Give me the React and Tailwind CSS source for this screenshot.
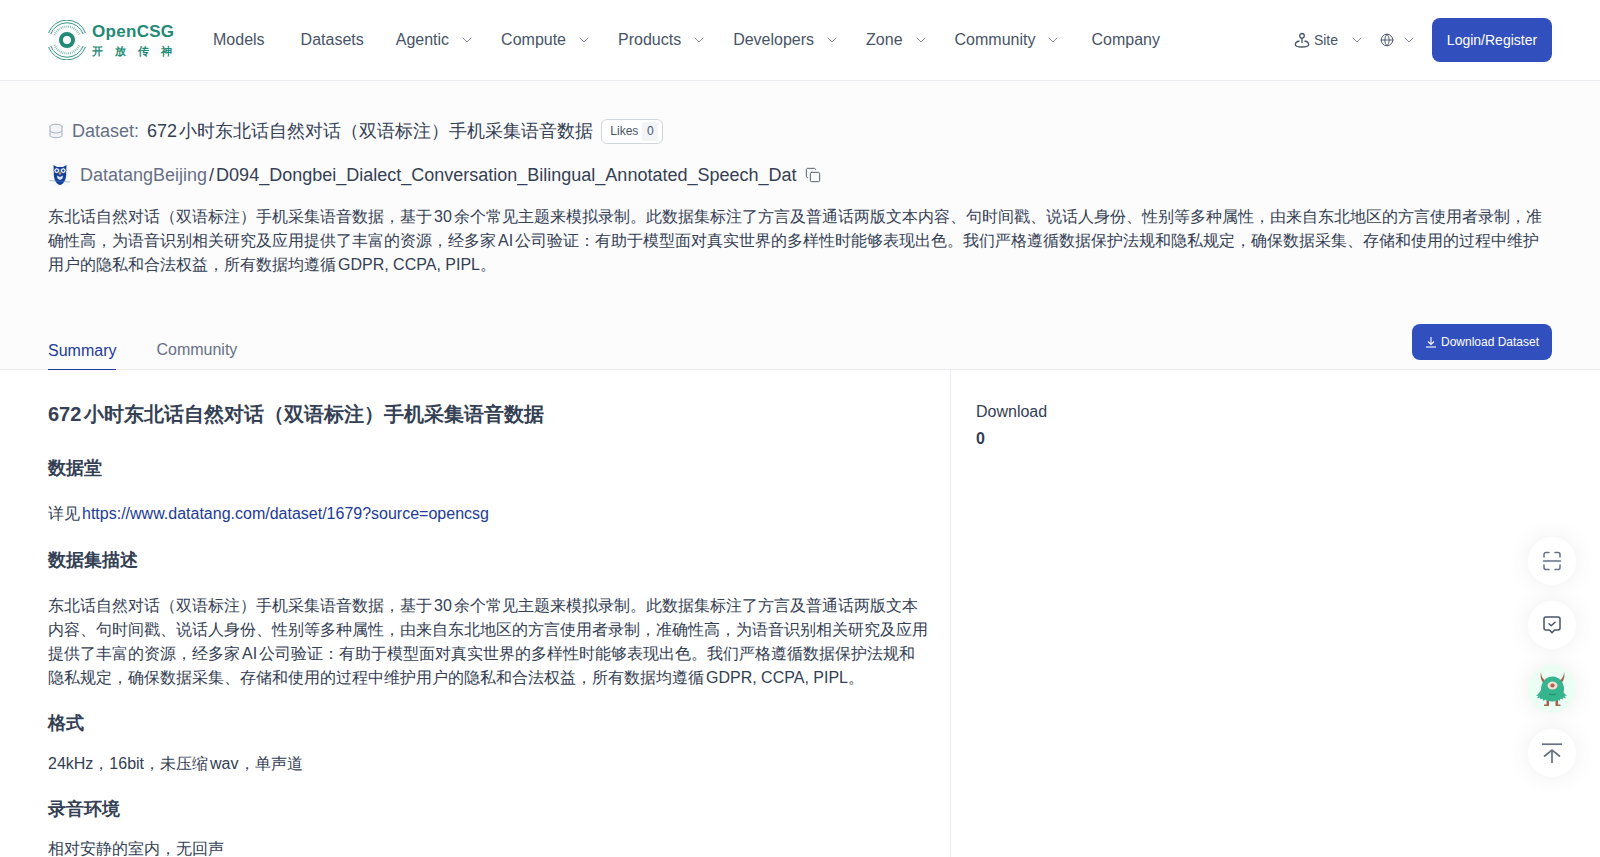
import React from "react";
import { ChevronDown, Globe, Database, Copy } from "lucide-react";

function Logo() {
  return (
    <div className="flex items-center w-[129px] h-[42px]">
      <svg width="40" height="40" viewBox="0 0 40 40" className="shrink-0 -ml-[1px]" fill="none" stroke="#1f8a76">
        <circle cx="20" cy="20" r="6" strokeWidth="4" />
        <path d="M1.500 13A19.700 19.700 0 0 1 38.500 13" strokeWidth="0.9" />
        <path d="M3.800 14A17.300 17.300 0 0 1 36.200 14" strokeWidth="0.9" />
        <path d="M7.500 15A13.500 13.500 0 0 1 32.500 15" strokeWidth="2.400" strokeDasharray="0.8 1.100" opacity="0.6" />
        <path d="M1.500 27A19.700 19.700 0 0 0 38.500 27" strokeWidth="0.9" />
        <path d="M3.800 26A17.300 17.300 0 0 0 36.200 26" strokeWidth="0.9" />
        <path d="M7.500 25A13.500 13.500 0 0 0 32.500 25" strokeWidth="2.400" strokeDasharray="0.8 1.100" opacity="0.6" />
      </svg>
      <div className="ml-[5px] flex flex-col text-[#1f8a76]">
        <span className="font-bold text-[17px] leading-[22px] tracking-[0.3px] whitespace-nowrap">OpenCSG</span>
        <span className="text-[11px] font-bold leading-[16px] flex justify-between w-[80px]">
          <span>开</span><span>放</span><span>传</span><span>神</span>
        </span>
      </div>
    </div>
  );
}

function NavItem({ label, className = "" }) {
  return (
    <div className={`flex items-center text-[16px] text-[#475467] whitespace-nowrap ${className}`}>
      {label}
    </div>
  );
}

function Chev({ className = "" }) {
  return <ChevronDown size={16} strokeWidth={1.2} className={`text-[#667085] ${className}`} />;
}

function SiteIcon() {
  return (
    <svg width="16" height="16" viewBox="0 0 16 16" fill="none" stroke="#475467" strokeWidth="1.300">
      <circle cx="8" cy="3.800" r="2.300" />
      <path d="M8 6.100V11" />
      <path d="M5.500 9C3 9.500 1.300 11 1.300 12.500 1.300 14 4 15 8 15s6.700-1 6.700-2.500c0-1.500-1.700-3-4.200-3.500" />
    </svg>
  );
}

function Owl() {
  return (
    <svg width="24" height="24" viewBox="0 0 24 24" className="shrink-0">
      <circle cx="12" cy="12" r="11.700" fill="#f8fafd" stroke="#eef2f8" strokeWidth="0.5" />
      <path d="M5.500 2 9 4h6l3.500-2-.3 8c.3 5-1.700 11-6.200 12-4.500-1-6.500-7-6.200-12z" fill="#14409c" />
      <circle cx="8.800" cy="7.600" r="2.700" fill="#fff" stroke="#14409c" strokeWidth="0.6" />
      <circle cx="15.200" cy="7.600" r="2.700" fill="#fff" stroke="#14409c" strokeWidth="0.6" />
      <circle cx="8.800" cy="7.600" r="1.200" fill="#14409c" />
      <circle cx="15.200" cy="7.600" r="1.200" fill="#14409c" />
      <path d="m12 8.500-1.300 2.300 1.300 1.200 1.300-1.200z" fill="#f0a030" />
      <path d="M9 12.500 12 14l3-1.500-.5 3L12 17l-2.500-1.500z" fill="#dfe9f8" />
      <path d="M1.500 17.500 22 19" stroke="#5a7fc0" strokeWidth="0.5" />
    </svg>
  );
}

function Monster() {
  return (
    <svg width="36" height="36" viewBox="0 0 36 36">
      <path d="M7 1c0 4 1.500 7 5 9l-2.500 2C7 9.500 6 5 7 1zM30 1c0 4-2 7-5 9l2.500 2C30 9.500 31 5 30 1z" fill="#a5644f" />
      <path d="M12.500 29v4.500H10V35h5v-6zM21.500 29v6h5v-1.500H24V29z" fill="#a5644f" />
      <ellipse cx="18.500" cy="18" rx="11.500" ry="12.500" fill="#35b48d" />
      <path d="M7 19 5 22l-3 3 2.500-.2L3 27.500l3-1 .5 2 2-1 1 2.500 2-1.500 2 1.500 2.500-1 2 1.200 2-1.200 2 1 2-1.500 1.500 1.500 1-2.500 2 1 .5-2 3 1-1.500-2.700 2.500.2-3-3-2-3z" fill="#35b48d" />
      <ellipse cx="18.500" cy="14.500" rx="5" ry="4" fill="#f3ddd3" />
      <circle cx="18.500" cy="14.500" r="2.100" fill="#b55f4d" />
      <path d="M15 23c2 1 4 1 6.500 0" stroke="#1d8a69" fill="none" />
    </svg>
  );
}

function ScanIcon() {
  return (
    <svg width="20" height="20" viewBox="0 0 20 20" fill="none" stroke="#667085" strokeWidth="1.500" strokeLinecap="round">
      <path d="M7 1.500H4a2 2 0 0 0-2 2V6" />
      <path d="M13 1.500h3a2 2 0 0 1 2 2V6" />
      <path d="M1.500 10h17" />
      <path d="M7 18.500H4a2 2 0 0 1-2-2V14" />
      <path d="M13 18.500h3a2 2 0 0 0 2-2V14" />
    </svg>
  );
}

function FeedbackIcon() {
  return (
    <svg width="20" height="20" viewBox="0 0 20 20" fill="none" stroke="#475467" strokeWidth="1.500" strokeLinecap="round" strokeLinejoin="round">
      <path d="M4 2h12a2 2 0 0 1 2 2v9a2 2 0 0 1-2 2h-3.500L10 17.800 7.500 15H4a2 2 0 0 1-2-2V4a2 2 0 0 1 2-2z" />
      <path d="m7 8.800 2.200 1.900 3.800-3.400" />
    </svg>
  );
}

function TopIcon() {
  return (
    <svg width="24" height="24" viewBox="0 0 24 24" fill="none" stroke="#667085" strokeWidth="1.700">
      <path d="M2 3.200h20" />
      <path d="M12 22V9" />
      <path d="m4 15.500 8-6.500 8 6.500" />
    </svg>
  );
}

function DownloadIcon() {
  return (
    <svg width="12" height="12" viewBox="0 0 12 12" fill="none" stroke="currentColor" strokeWidth="1.100">
      <path d="M6 1v7" />
      <path d="M3 5.500 6 8.500l3-3" />
      <path d="M1 11h10" />
    </svg>
  );
}

function Float({ children, className = "bg-white" }) {
  return (
    <div className={`w-12 h-12 rounded-full flex items-center justify-center shadow-[0_0_24px_rgba(0,0,0,0.07)] ${className}`}>
      {children}
    </div>
  );
}

export default function App() {
  return (
    <div className="[font-family:'Liberation_Sans',sans-serif] [text-autospace:normal] relative h-screen overflow-hidden bg-white text-[#344054]">
      <header className="h-[81px] flex items-center px-12 bg-white border-b border-[#eaecf0]">
        <Logo />
        <nav className="flex items-center ml-[36px]">
          <NavItem label="Models" />
          <NavItem label="Datasets" className="ml-9" />
          <NavItem label="Agentic" className="ml-8" />
          <Chev className="ml-[10px]" />
          <NavItem label="Compute" className="ml-[26px]" />
          <Chev className="ml-[10px]" />
          <NavItem label="Products" className="ml-[26px]" />
          <Chev className="ml-[10px]" />
          <NavItem label="Developers" className="ml-[26px]" />
          <Chev className="ml-[10px]" />
          <NavItem label="Zone" className="ml-[26px]" />
          <Chev className="ml-[10px]" />
          <NavItem label="Community" className="ml-[26px]" />
          <Chev className="ml-[10px]" />
          <NavItem label="Company" className="ml-[30px]" />
        </nav>
        <div className="ml-auto flex items-center">
          <SiteIcon />
          <span className="ml-[4px] text-[14px] text-[#475467]">Site</span>
          <Chev className="ml-[11px]" />
          <Globe size={14} strokeWidth={1.6} className="ml-[15px] text-[#475467]" />
          <Chev className="ml-[7px]" />
          <button className="ml-[15px] h-11 w-[120px] rounded-lg bg-[#3250bd] text-white text-[14px]">Login/Register</button>
        </div>
      </header>

      <section className="bg-[#fcfcfd] border-b border-[#eaecf0] h-[289px] px-12 pt-[35px] flex flex-col">
        <div className="flex items-center h-[30px]">
          <Database size={16} strokeWidth={1.3} className="text-[#98a2b3] fill-[#f2f4f7]" />
          <span className="ml-2 text-[18px] text-[#667085]">Dataset:</span>
          <span className="ml-2 text-[18px] text-[#344054]">672小时东北话自然对话（双语标注）手机采集语音数据</span>
          <div className="ml-2 flex items-center h-[25px] w-[62px] rounded-md border border-[#d0d5dd] bg-white pl-[8px] text-[12px] text-[#475467]">
            Likes
            <span className="ml-1 w-[16px] text-center bg-[#f2f4f7] leading-[19px]">0</span>
          </div>
        </div>
        <div className="flex items-center mt-[14px] h-[30px]">
          <Owl />
          <span className="ml-2 text-[18px] text-[#667085]">DatatangBeijing</span>
          <span className="mx-[2px] text-[18px] text-[#344054]">/</span>
          <span className="text-[18px] text-[#344054]">D094_Dongbei_Dialect_Conversation_Bilingual_Annotated_Speech_Dat</span>
          <Copy size={16} strokeWidth={1.4} className="ml-2 text-[#475467]" />
        </div>
        <p className="mt-[15px] text-[16px] leading-6 text-[#344054]">
          东北话自然对话（双语标注）手机采集语音数据，基于30余个常见主题来模拟录制。此数据集标注了方言及普通话两版文本内容、句时间戳、说话人身份、性别等多种属性，由来自东北地区的方言使用者录制，准确性高，为语音识别相关研究及应用提供了丰富的资源，经多家AI公司验证：有助于模型面对真实世界的多样性时能够表现出色。我们严格遵循数据保护法规和隐私规定，确保数据采集、存储和使用的过程中维护用户的隐私和合法权益，所有数据均遵循GDPR, CCPA, PIPL。
        </p>
        <div className="mt-auto flex items-end justify-between">
          <div className="flex items-end">
            <div className="h-[40px] pt-[2px] -mb-[1px] flex items-center border-b border-[#223b99] text-[16px] text-[#223b99]">Summary</div>
            <div className="h-[40px] pt-[2px] ml-10 flex items-center text-[16px] text-[#667085]">Community</div>
          </div>
          <button className="mb-[9px] h-9 w-[140px] rounded-lg bg-[#3250bd] text-white text-[12px] flex items-center justify-center gap-1">
            <DownloadIcon />
            Download Dataset
          </button>
        </div>
      </section>

      <main className="flex">
        <article className="w-[951px] shrink-0 border-r border-[#eaecf0] pl-12 pr-[22px] pt-[29px] text-[16px] leading-6 text-[#344054]">
          <h1 className="text-[20px] font-bold leading-[30px]">672小时东北话自然对话（双语标注）手机采集语音数据</h1>
          <h2 className="mt-[25px] text-[18px] font-bold leading-[28px]">数据堂</h2>
          <p className="mt-[20px]">详见<a className="text-[#223b99]">https://www.datatang.com/dataset/1679?source=opencsg</a></p>
          <h2 className="mt-[20px] text-[18px] font-bold leading-[28px]">数据集描述</h2>
          <p className="mt-[20px]">东北话自然对话（双语标注）手机采集语音数据，基于30余个常见主题来模拟录制。此数据集标注了方言及普通话两版文本内容、句时间戳、说话人身份、性别等多种属性，由来自东北地区的方言使用者录制，准确性高，为语音识别相关研究及应用提供了丰富的资源，经多家AI公司验证：有助于模型面对真实世界的多样性时能够表现出色。我们严格遵循数据保护法规和隐私规定，确保数据采集、存储和使用的过程中维护用户的隐私和合法权益，所有数据均遵循GDPR, CCPA, PIPL。</p>
          <h2 className="mt-[19px] text-[18px] font-bold leading-[28px]">格式</h2>
          <p className="mt-[15px]">24kHz，16bit，未压缩wav，单声道</p>
          <h2 className="mt-[19px] text-[18px] font-bold leading-[28px]">录音环境</h2>
          <p className="mt-[14px]">相对安静的室内，无回声</p>
        </article>
        <aside className="pl-[25px] pt-[30px] text-[16px] text-[#344054]">
          <div className="leading-6">Download</div>
          <div className="mt-[3px] font-bold leading-6">0</div>
        </aside>
      </main>

      <div className="fixed right-6 bottom-[80px] flex flex-col gap-4">
        <Float><ScanIcon /></Float>
        <Float><FeedbackIcon /></Float>
        <Float className="bg-[#ecfdf3]"><Monster /></Float>
        <Float><TopIcon /></Float>
      </div>
    </div>
  );
}
